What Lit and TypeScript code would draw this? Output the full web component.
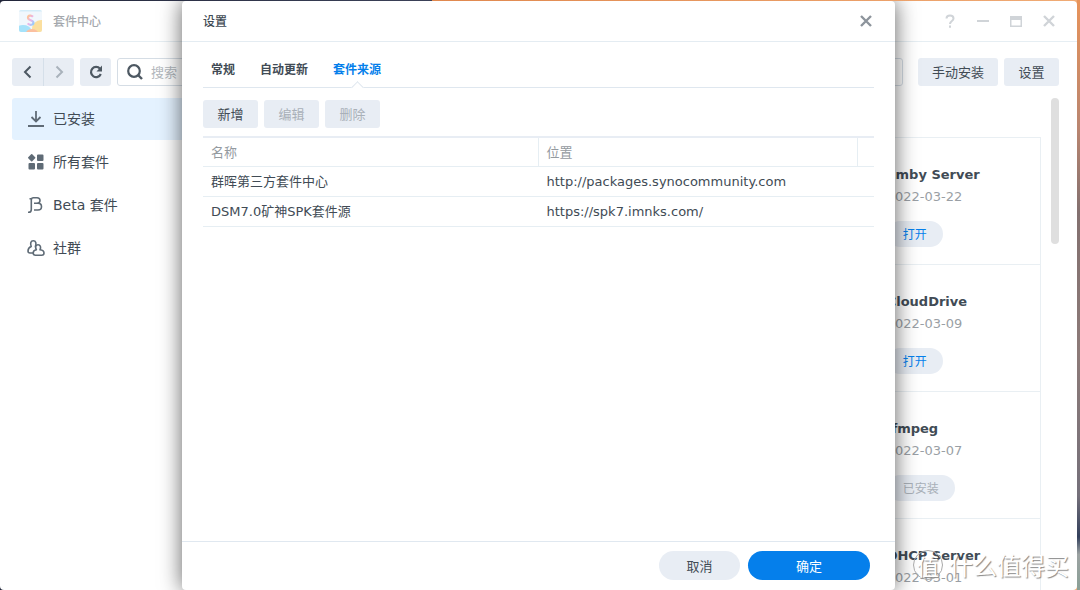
import { LitElement, html, css, svg } from "lit";
import { customElement, property } from "lit/decorators.js";
import { classMap } from "lit/directives/class-map.js";

const font = css`"DejaVu Sans", "Noto Sans CJK SC", sans-serif`;
const cjk = css`"Noto Sans CJK SC", sans-serif`;

const buttonStyles = css`
  * { box-sizing: border-box; }
  button {
    font: 13px/20px ${cjk};
    color: #414b55;
    background: #e8edf4;
    border: 0;
    border-radius: 3px;
    height: 28px;
    padding: 0 14px;
    white-space: nowrap;
  }
  button:disabled { color: #a9b0b8; }
  svg { display: block; }
`;

interface Source { name: string; url: string; }
interface Pkg { name: string; date: string; installed?: boolean; }

const SOURCES: Source[] = [
  { name: "群晖第三方套件中心", url: "http://packages.synocommunity.com" },
  { name: "DSM7.0矿神SPK套件源", url: "https://spk7.imnks.com/" },
];

const PACKAGES: Pkg[] = [
  { name: "Emby Server", date: "2022-03-22" },
  { name: "CloudDrive", date: "2022-03-09" },
  { name: "ffmpeg", date: "2022-03-07", installed: true },
  { name: "DHCP Server", date: "2022-03-01" },
];

@customElement("package-card")
class PackageCard extends LitElement {
  @property({ attribute: false }) pkg!: Pkg;
  static styles = [buttonStyles, css`
    :host {
      display: block;
      height: 127px;
      padding: 26px 0 0 125px;
      border: 1px solid #e9eff3;
      border-top: 0;
      box-sizing: border-box;
    }
    h3 { margin: 0; font: bold 13px/22px ${font}; color: #414b55; white-space: nowrap; }
    p { margin: 0; font: 13px/22px ${font}; color: #9a9fa5; }
    button { margin-top: 13px; height: 26px; padding: 0 16px; border-radius: 13px; font-size: 12px; color: #057feb; }
  `];
  render() {
    const { name, date, installed } = this.pkg;
    return html`<h3>${name}</h3><p>${date}</p>
      <button ?disabled=${installed}>${installed ? "已安装" : "打开"}</button>`;
  }
}

@customElement("settings-dialog")
class SettingsDialog extends LitElement {
  static styles = [buttonStyles, css`
    :host {
      display: flex;
      flex-direction: column;
      background: #fff;
      border-radius: 4px;
      box-shadow: 0 0 22px rgba(0, 0, 0, 0.62);
      font: 13px/20px ${font};
      color: #414b55;
    }
    header {
      display: flex;
      align-items: center;
      justify-content: space-between;
      height: 41px;
      padding: 0 20px 0 21px;
      border-bottom: 1px solid #e4ecf2;
    }
    h2 { margin: 0; font: 500 12px/20px ${cjk}; }
    .close { padding: 0; height: 18px; background: none; }
    main { flex: 1; padding: 17px 21px 0; }
    .tabs { display: flex; gap: 25px; padding: 0 8px; height: 29px; border-bottom: 1px solid #dfe7ef; }
    .tab { position: relative; height: 29px; padding: 0 0 9px; font: bold 12px/20px ${cjk}; background: none; }
    .active { color: #057feb; }
    .active::after {
      content: "";
      position: absolute;
      left: calc(50% - 4px);
      bottom: -4px;
      width: 8px;
      height: 8px;
      background: #fff;
      border: solid #dfe7ef;
      border-width: 1px 0 0 1px;
      transform: rotate(45deg);
    }
    .actions { display: flex; gap: 6px; padding: 12px 0 8px; }
    .actions button { min-width: 55px; }
    table { width: 100%; border-collapse: separate; border-spacing: 0; border-top: 2px solid #e8edf4; table-layout: fixed; }
    th, td { height: 30px; padding: 0 8px; text-align: left; border-bottom: 1px solid #e6eef3; font-weight: normal; }
    th { height: 29px; padding-top: 1px; color: #949a9f; border-right: 1px solid #e6eef3; }
    th:last-child { border-right: 0; }
    .name { width: 50%; }
    .end { width: 16px; padding: 0; }
    footer { display: flex; justify-content: flex-end; gap: 8px; padding: 9px 25px 10px; border-top: 1px solid #e0e8f0; }
    footer button { height: 29px; border-radius: 15px; min-width: 81px; }
    footer .ok { min-width: 122px; background: #057feb; color: #fff; }
  `];
  render() {
    return html`
      <header>
        <h2>设置</h2>
        <button class="close" aria-label="关闭"><svg width="18" height="18" viewBox="0 0 18 18"><path d="M4 4l10 10M14 4L4 14" stroke="#8d949c" stroke-width="2.4"/></svg></button>
      </header>
      <main>
        <div class="tabs" role="tablist">
          ${["常规", "自动更新", "套件来源"].map((t, i) => html`<button role="tab" aria-selected=${i === 2} class=${classMap({ tab: true, active: i === 2 })}>${t}</button>`)}
        </div>
        <div class="actions">
          <button>新增</button><button disabled>编辑</button><button disabled>删除</button>
        </div>
        <table>
          <thead><tr><th class="name">名称</th><th>位置</th><th class="end"></th></tr></thead>
          <tbody>${SOURCES.map((s) => html`<tr><td>${s.name}</td><td colspan="2">${s.url}</td></tr>`)}</tbody>
        </table>
      </main>
      <footer><button>取消</button><button class="ok">确定</button></footer>
    `;
  }
}

const navIcons = [
  svg`<path d="M9 1v10M4.500 7L9 11.500 13.500 7M1 16h16" fill="none" stroke="#5f6b76" stroke-width="1.800"/>`,
  svg`<path d="M4.700 1.800L7.600 4.700 4.700 7.600 1.800 4.700z" fill="#5f6b76" stroke="#5f6b76" stroke-width="1.600" stroke-linejoin="round"/><path d="M11 1.500h4.500a1 1 0 0 1 1 1V7a1 1 0 0 1-1 1H11a1 1 0 0 1-1-1V2.500a1 1 0 0 1 1-1zM2.500 10H7a1 1 0 0 1 1 1v4.500a1 1 0 0 1-1 1H2.500a1 1 0 0 1-1-1V11a1 1 0 0 1 1-1zM11 10h4.500a1 1 0 0 1 1 1v4.500a1 1 0 0 1-1 1H11a1 1 0 0 1-1-1V11a1 1 0 0 1 1-1z" fill="#5f6b76"/>`,
  svg`<path d="M1 16.200h.8c1.800 0 2.500-1 2.500-2.800V4c0-1.500.8-2.200 2.200-2.200h3.500c2 0 3 .9 3 2.700s-1 2.800-3 2.800H7M10 7.300h1c2.300 0 3.500 1.200 3.500 3.400s-1.300 3.300-3.500 3.300H7M2.500 2.800h2" fill="none" stroke="#5f6b76" stroke-width="1.600"/>`,
  svg`<g fill="#fff" stroke="#5f6b76" stroke-width="1.600" stroke-linejoin="round"><path d="M4.200 7.600C3 4.300 3.700 1.800 6.300 1.800S9.600 4.300 8.400 7.600L11 14H3c-1.300 0-2-.7-2-2 0-2.300 1-3.600 3.200-4.400z"/><path d="M9.400 10.800C8 8 8.700 5.700 11 5.700s3.300 2.300 2 5.100c2.700.4 4 1.500 4 3.300 0 1.400-.7 2.100-2.100 2.100H8.300c-1.400 0-2.100-.7-2.100-2.100 0-1.800.8-2.900 3.200-3.300z"/></g>`,
];

@customElement("app-root")
class AppRoot extends LitElement {
  static styles = [buttonStyles, css`
    :host {
      display: block;
      height: 100vh;
      box-sizing: border-box;
      padding: 1px 3px 0 0;
      overflow: hidden;
      font: 13px/20px ${font};
      color: #414b55;
      background:
        linear-gradient(#e8935a, #b98570 22%, #83706f 36%, #8c7a78 60%, #75707a 84%, #33405c 91%, #9ca2a2 94%, #8aa096) right / 3px 100% no-repeat,
        linear-gradient(90deg, #22263a, #3b4158 40%, #e0884e 40%, #f0ab75);
    }
    .window {
      position: relative;
      display: flex;
      flex-direction: column;
      height: 100%;
      background: #fff;
      border-radius: 4px;
      overflow: hidden;
    }
    .titlebar { display: flex; align-items: center; height: 41px; flex: none; padding: 0 19px; border-bottom: 1px solid #e6eef3; }
    .titlebar h1 { flex: 1; margin: 0 0 0 10px; font: 500 12px/20px ${cjk}; color: #a4a8ad; }
    .controls { display: flex; gap: 15px; }
    .controls button { background: none; padding: 0; height: 18px; width: 18px; }
    .toolbar { display: flex; gap: 6px; padding: 16px 18px 12px 12px; }
    .toolbar button { min-width: 55px; }
    .history { display: flex; }
    .toolbar .icon { padding: 0 6px; width: 31px; min-width: 31px; display: grid; place-items: center; }
    .history .icon:first-child { border-radius: 3px 0 0 3px; }
    .history .icon:last-child { border-radius: 0 3px 3px 0; border-left: 1px solid #d5dfe9; }
    .search { flex: 1; display: flex; align-items: center; gap: 7px; height: 28px; margin: 0 9px 0 0; padding: 0 8px; border: 1px solid #d5dde5; border-radius: 3px; }
    .search input { flex: 1; border: 0; outline: 0; padding: 0; background: none; font: 13px/20px ${cjk}; min-width: 0; }
    .search input::placeholder { color: #b3b8bd; }
    .body { flex: 1; display: flex; min-height: 0; }
    nav { width: 200px; padding-left: 12px; flex: none; display: flex; flex-direction: column; gap: 1px; }
    nav a { display: flex; align-items: center; gap: 8px; height: 42px; padding-left: 15px; font: 14px/20px ${font}; color: #414b55; text-decoration: none; border-radius: 3px; }
    nav .selected { background: #e4f2ff; }
    nav .selected svg path { fill: none; }
    .packages { flex: 1; display: grid; grid-template-columns: repeat(3, 1fr); align-content: start; padding: 39px 10px 0 0; overflow: hidden; }
    .list { grid-column: 3; border-top: 1px solid #e9eff3; }
    .scroll { width: 8px; height: 146px; margin-right: 18px; border-radius: 4px; background: #dfdfdf; }
    .overlay { position: absolute; inset: 0; display: flex; justify-content: center; }
    settings-dialog { width: 66.2%; }
    .mark { position: absolute; right: 8px; bottom: 9px; display: flex; align-items: center; gap: 6px; font: 24px/32px ${cjk}; color: #fff; text-shadow: 1px 1px 1px #888; }
    .seal { width: 30px; height: 30px; font-size: 22px; line-height: 28px; text-align: center; border: 1px solid #aaa; border-radius: 50%; }
  `];
  render() {
    return html`
      <div class="window">
        <div class="titlebar">
          <svg width="24" height="24" viewBox="0 0 24 24">
            <defs><clipPath id="c"><rect x="0" y="1" width="23" height="22" rx="2"/></clipPath>
            <linearGradient id="g" x1="0" y1="0" x2="1" y2="1"><stop stop-color="#ffc58e"/><stop offset=".5" stop-color="#ecb2e8"/><stop offset="1" stop-color="#8fcfff"/></linearGradient></defs>
            <g clip-path="url(#c)"><path fill="#f1f7fc" d="M0 0h24v24H0z"/><path fill="#d3ecf8" d="M0 0h24v2.500H0z"/><circle cx="22" cy="20" r="9" fill="#fbdf9f"/><ellipse cx="4" cy="21" rx="8" ry="5" fill="#a5e2fa"/><ellipse cx="13" cy="24" rx="6" ry="4" fill="#fbc0a0"/></g>
            <path d="M14 7.800C12.300 6 9 6.300 9 8.700c0 3 5.400 2 5.400 5 0 2.500-4 2.800-5.700.7" fill="none" stroke="url(#g)" stroke-width="2.200"/>
          </svg>
          <h1>套件中心</h1>
          <div class="controls">
            <button aria-label="帮助"><svg width="18" height="18" viewBox="0 0 18 18" fill="none" stroke="#d0d4d8" stroke-width="2"><path d="M5.500 6.500C5.500 4.500 7 3.500 9 3.500s3.500 1.200 3.500 3C12.500 9 9 9 9 12M9 13.500v2.200"/></svg></button>
            <button aria-label="最小化"><svg width="18" height="18" viewBox="0 0 18 18"><path d="M3 9h12" stroke="#d0d4d8" stroke-width="2"/></svg></button>
            <button aria-label="最大化"><svg width="18" height="18" viewBox="0 0 18 18"><path fill="#d0d4d8" fill-rule="evenodd" d="M3 4h12v11H3zM4.500 8v5.500h9V8z"/></svg></button>
            <button aria-label="关闭窗口"><svg width="18" height="18" viewBox="0 0 18 18"><path d="M4 4l10 10M14 4L4 14" stroke="#d0d4d8" stroke-width="2.400"/></svg></button>
          </div>
        </div>
        <div class="toolbar">
          <div class="history">
            <button class="icon" aria-label="后退"><svg width="18" height="18" viewBox="0 0 18 18"><path d="M11.500 3.500L6 9l5.500 5.500" fill="none" stroke="#4d5862" stroke-width="2"/></svg></button>
            <button class="icon" aria-label="前进"><svg width="18" height="18" viewBox="0 0 18 18"><path d="M6.500 3.500L12 9l-5.500 5.500" fill="none" stroke="#a9b2bb" stroke-width="2"/></svg></button>
          </div>
          <button class="icon" aria-label="刷新"><svg width="18" height="18" viewBox="0 0 18 18"><path d="M13.800 11A5.100 5.100 0 1 1 13 5.700" fill="none" stroke="#4d5862" stroke-width="2.200"/><path d="M15 2.500V8.500H9.500z" fill="#4d5862"/></svg></button>
          <label class="search">
            <svg width="18" height="18" viewBox="0 0 18 18"><circle cx="8" cy="8" r="5.800" fill="none" stroke="#4d5862" stroke-width="2.200"/><path d="M12 12l4 4" stroke="#4d5862" stroke-width="2.400"/></svg>
            <input type="search" placeholder="搜索" aria-label="搜索">
          </label>
          <button>手动安装</button>
          <button>设置</button>
        </div>
        <div class="body">
          <nav>
            ${["已安装", "所有套件", "Beta 套件", "社群"].map((t, i) => html`
              <a href="#" class=${classMap({ selected: i === 0 })}><svg width="18" height="18" viewBox="0 0 18 18">${navIcons[i]}</svg>${t}</a>`)}
          </nav>
          <div class="packages"><div class="list">${PACKAGES.map((p) => html`<package-card .pkg=${p}></package-card>`)}</div></div>
          <div class="scroll"></div>
        </div>
        <div class="overlay"><settings-dialog role="dialog" aria-label="设置"></settings-dialog></div>
        <div class="mark"><span class="seal">值</span><span>什么值得买</span></div>
      </div>
    `;
  }
}
